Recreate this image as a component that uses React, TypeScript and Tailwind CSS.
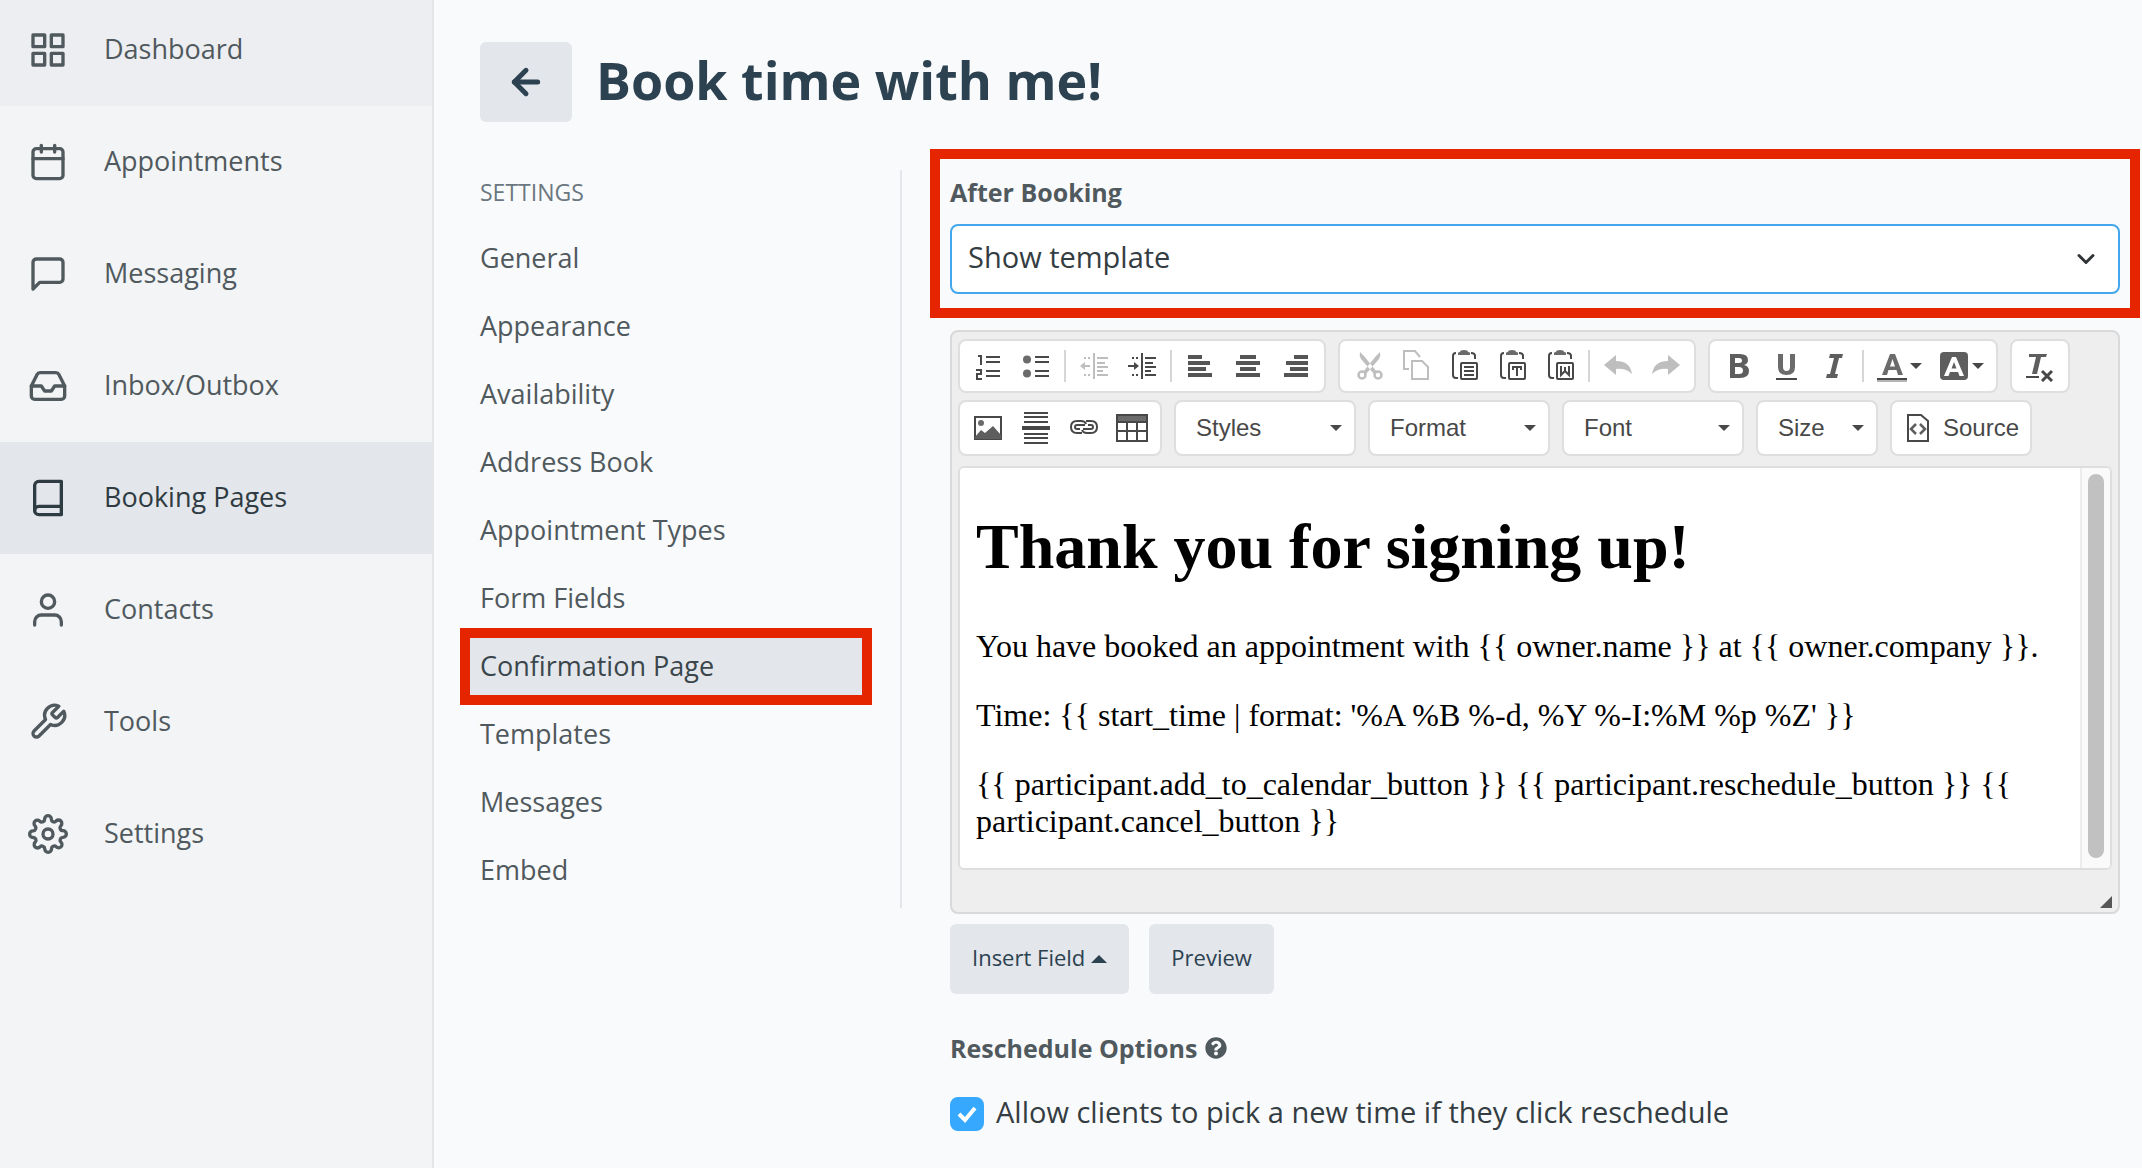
import type { ReactNode } from 'react';
import {
  FiArrowLeft,
  FiBook,
  FiCalendar,
  FiChevronDown,
  FiGrid,
  FiInbox,
  FiMessageSquare,
  FiSettings,
  FiTool,
  FiUser,
} from 'react-icons/fi';
import { FaQuestionCircle } from 'react-icons/fa';

const mainNav = [
  { label: 'Dashboard', icon: FiGrid, className: 'bg-[#eceef1] text-[#50595d]' },
  { label: 'Appointments', icon: FiCalendar, className: 'text-[#50595d]' },
  { label: 'Messaging', icon: FiMessageSquare, className: 'text-[#50595d]' },
  { label: 'Inbox/Outbox', icon: FiInbox, className: 'text-[#50595d]' },
  { label: 'Booking Pages', icon: FiBook, className: 'bg-[#e3e6ea] text-[#2f3b42]' },
  { label: 'Contacts', icon: FiUser, className: 'text-[#50595d]' },
  { label: 'Tools', icon: FiTool, className: 'text-[#50595d]' },
  { label: 'Settings', icon: FiSettings, className: 'text-[#50595d]' },
];

const settingsNav = [
  'General',
  'Appearance',
  'Availability',
  'Address Book',
  'Appointment Types',
  'Form Fields',
  'Confirmation Page',
  'Templates',
  'Messages',
  'Embed',
];

const Icon = ({ children }: { children: ReactNode }) => (
  <svg viewBox="0 0 32 32" className="h-8 w-8 shrink-0" fill="#484848">
    {children}
  </svg>
);

const PasteBoard = ({ children }: { children: ReactNode }) => (
  <Icon>
    <path d="M8 3Q5 3 5 6V25Q5 28 8 28H10M23 3Q27 3 27 6V9" fill="none" stroke="#484848" strokeWidth="2" />
    <path d="M10 5V3Q10 2 12 2Q12 0 16 0Q20 0 20 2Q22 2 22 3V5Z" fill="#6b6b6b" />
    <rect x="13" y="13" width="16" height="16" rx="1" fill="#fff" stroke="#484848" strokeWidth="2" />
    {children}
  </Icon>
);

const Group = ({ children }: { children: ReactNode }) => (
  <div className="flex h-[54px] items-center rounded-lg border-2 border-[#dedede] bg-white px-1">{children}</div>
);

const Tool = ({ label, disabled, children }: { label: string; disabled?: boolean; children: ReactNode }) => (
  <button
    type="button"
    aria-label={label}
    disabled={disabled}
    className="flex h-12 w-12 items-center justify-center disabled:opacity-35"
  >
    {children}
  </button>
);

const Separator = () => <span className="mx-1 h-8 w-0.5 bg-[#d6d6d6]" />;

const Caret = () => (
  <svg viewBox="0 0 12 6" className="h-1.5 w-3" fill="#484848">
    <path d="M0 0H12L6 6Z" />
  </svg>
);

const Combo = ({ label, small }: { label: string; small?: boolean }) => (
  <div className="relative">
    <select
      aria-label={label}
      className={`${small ? 'w-[122px]' : 'w-[182px]'} h-14 appearance-none rounded-lg border-2 border-[#dedede] bg-white pl-5 font-['Liberation_Sans',sans-serif] text-2xl text-[#484848]`}
    >
      <option>{label}</option>
    </select>
    <span className="pointer-events-none absolute inset-y-0 right-3.5 flex items-center">
      <Caret />
    </span>
  </div>
);

const Toolbar = () => (
  <div className="space-y-[7px]">
    <div className="flex gap-3">
      <Group>
        <Tool label="Numbered list">
          <Icon>
            <path d="M14 6H28V8H14ZM14 11H28V13H14ZM14 20H28V22H14ZM14 25H28V27H14Z" />
            <path d="M6 6H9V15M4 20H9V24H5V29H10" fill="none" stroke="#484848" strokeWidth="2" />
          </Icon>
        </Tool>
        <Tool label="Bulleted list">
          <Icon>
            <circle cx="7" cy="9.500" r="4" fill="#6b6b6b" />
            <circle cx="7" cy="23.500" r="4" fill="#6b6b6b" />
            <path d="M15 6H29V8H15ZM15 11H29V13H15ZM15 20H29V22H15ZM15 25H29V27H15Z" />
          </Icon>
        </Tool>
        <Separator />
        <Tool label="Decrease indent" disabled>
          <Icon>
            <path d="M15 3H17V29H15ZM19 7H30V9H19ZM19 12H27V14H19ZM19 16H30V18H19ZM19 20H25V22H19ZM19 24H30V26H19Z" />
            <path d="M6 7H8V9H6ZM10 7H12V9H10ZM6 24H8V26H6ZM10 24H12V26H10ZM2 16L7 12V15H12V17H7V20Z" />
          </Icon>
        </Tool>
        <Tool label="Increase indent">
          <Icon>
            <path d="M15 3H17V29H15ZM19 7H30V9H19ZM19 12H27V14H19ZM19 16H30V18H19ZM19 20H25V22H19ZM19 24H30V26H19Z" />
            <path d="M6 7H8V9H6ZM10 7H12V9H10ZM6 24H8V26H6ZM10 24H12V26H10ZM13 16L8 12V15H2V17H8V20Z" />
          </Icon>
        </Tool>
        <Separator />
        <Tool label="Align left">
          <Icon>
            <path d="M4 5H18V9H4ZM4 11H26V15H4ZM4 17H22V21H4ZM4 23H28V27H4Z" fill="#555" />
          </Icon>
        </Tool>
        <Tool label="Center">
          <Icon>
            <path d="M8 5H24V9H8ZM4 11H28V15H4ZM8 17H24V21H8ZM4 23H28V27H4Z" fill="#555" />
          </Icon>
        </Tool>
        <Tool label="Align right">
          <Icon>
            <path d="M14 5H28V9H14ZM6 11H28V15H6ZM10 17H28V21H10ZM4 23H28V27H4Z" fill="#555" />
          </Icon>
        </Tool>
      </Group>
      <Group>
        <Tool label="Cut" disabled>
          <Icon>
            <path d="M8 2Q7 6 9 9L22 24L25 22L12 6ZM28 2Q29 6 27 9L14 24L11 22L24 6Z" />
            <circle cx="10" cy="25" r="3.500" fill="none" stroke="#484848" strokeWidth="2.500" />
            <circle cx="26" cy="25" r="3.500" fill="none" stroke="#484848" strokeWidth="2.500" />
          </Icon>
        </Tool>
        <Tool label="Copy" disabled>
          <Icon>
            <path d="M9 19H4V1H15L20 7M12 11H22L28 17V29H12Z" fill="none" stroke="#484848" strokeWidth="2" />
          </Icon>
        </Tool>
        <Tool label="Paste">
          <PasteBoard>
            <path d="M16 16H26V18H16ZM16 20H26V22H16ZM16 24H26V26H16Z" />
          </PasteBoard>
        </Tool>
        <Tool label="Paste as plain text">
          <PasteBoard>
            <path d="M16 16H26V20H24V18H22V26H20V18H18V20H16Z" />
          </PasteBoard>
        </Tool>
        <Tool label="Paste from Word">
          <PasteBoard>
            <path d="M17 16V25L21 21L25 25V16M21 17V22" fill="none" stroke="#484848" strokeWidth="2" />
          </PasteBoard>
        </Tool>
        <Separator />
        <Tool label="Undo" disabled>
          <Icon>
            <path d="M2 15L14 5V11Q28 11 30 24Q24 18 14 19V25Z" />
          </Icon>
        </Tool>
        <Tool label="Redo" disabled>
          <Icon>
            <path d="M30 15L18 5V11Q4 11 2 24Q8 18 18 19V25Z" />
          </Icon>
        </Tool>
      </Group>
      <Group>
        <Tool label="Bold">
          <Icon>
            <path fillRule="evenodd" d="M8 4H18Q26 4 26 10Q26 14 22 15Q27 16 27 21Q27 28 18 28H8ZM13 8V13H17Q20 13 20 10.500Q20 8 17 8ZM13 17V24H17Q21 24 21 20.500Q21 17 17 17Z" fill="#5e5e5e" />
          </Icon>
        </Tool>
        <Tool label="Underline">
          <Icon>
            <path d="M8 4H13V17Q13 21 16.500 21Q20 21 20 17V4H25V17Q25 25 16.500 25Q8 25 8 17Z" fill="#6b6b6b" />
            <path d="M6 28H27V30H6Z" />
          </Icon>
        </Tool>
        <Tool label="Italic">
          <Icon>
            <path d="M12 4H25L24 8H21L17 24H20L19 28H8L9 24H12L16 8H11Z" fill="#5e5e5e" />
          </Icon>
        </Tool>
        <Separator />
        <button type="button" aria-label="Text color" className="flex h-12 w-[62px] items-center justify-center gap-0.5">
          <Icon>
            <path fillRule="evenodd" d="M14 4H19L27 25H22L20.500 20H12.500L11 25H6ZM16.500 9L14 16.500H19Z" fill="#6b6b6b" />
            <path d="M1 28H31V30H1Z" />
            <path d="M1 30H31V32H1Z" fill="#b5b5b5" />
          </Icon>
          <Caret />
        </button>
        <button type="button" aria-label="Background color" className="flex h-12 w-[62px] items-center justify-center gap-0.5">
          <Icon>
            <rect x="2" y="2" width="28" height="28" rx="4" fill="#5e5e5e" />
            <path fillRule="evenodd" d="M14 7H18L26 26H21.500L20 22H12L10.500 26H6ZM16 12L13.500 18.500H18.500Z" fill="#fff" />
          </Icon>
          <Caret />
        </button>
      </Group>
      <Group>
        <Tool label="Remove format">
          <Icon>
            <path d="M5 4H23L22 7H17L13 24H8L12 7H5Z" fill="#5e5e5e" />
            <path d="M2 26H15V28H2Z" />
            <path d="M18 21L28 31M28 21L18 31" stroke="#484848" strokeWidth="3" />
          </Icon>
        </Tool>
      </Group>
    </div>
    <div className="flex items-center gap-3">
      <div className="flex h-14 items-center rounded-lg border-2 border-[#dedede] bg-white px-1">
        <Tool label="Image">
          <Icon>
            <path d="M3 5H29V27H3Z" fill="none" stroke="#484848" strokeWidth="2" />
            <circle cx="9" cy="11" r="3" fill="#6b6b6b" />
            <path d="M3 27V25L9 18L13 21L21 14L29 23V27Z" fill="#5e5e5e" />
          </Icon>
        </Tool>
        <Tool label="Horizontal line">
          <Icon>
            <path d="M4 0H28V2H4ZM4 4H28V6H4ZM4 9H28V11H4ZM2 14H30V18H2ZM4 21H28V23H4ZM4 25H28V27H4ZM4 30H28V32H4Z" />
          </Icon>
        </Tool>
        <Tool label="Link">
          <Icon>
            <g fill="none" stroke="#484848" strokeWidth="2">
              <path d="M14 21H9Q3 21 3 15T9 9H13Q17 9 18 12M18 9H23Q29 9 29 15T23 21H19Q15 21 14 18" />
              <path d="M12 17H9Q7 17 7 15T9 13H17M20 13H23Q25 13 25 15T23 17H15" />
            </g>
          </Icon>
        </Tool>
        <Tool label="Table">
          <Icon>
            <path d="M0 2H32V10H0Z" fill="#6b6b6b" />
            <path d="M1 3H31V29H1ZM1 10H31M1 19H31M11 10V29M21 10V29" fill="none" stroke="#484848" strokeWidth="2" />
          </Icon>
        </Tool>
      </div>
      <Combo label="Styles" />
      <Combo label="Format" />
      <Combo label="Font" />
      <Combo label="Size" small />
      <button
        type="button"
        className="flex h-14 items-center gap-2 rounded-lg border-2 border-[#dedede] bg-white px-[11px] font-['Liberation_Sans',sans-serif] text-2xl text-[#484848]"
      >
        <Icon>
          <path d="M5 3H18L25 9V29H5Z" fill="none" stroke="#484848" strokeWidth="2" />
          <path d="M13 12L8 17L13 22M17 12L22 17L17 22" fill="none" stroke="#5e5e5e" strokeWidth="2.500" />
        </Icon>
        Source
      </button>
    </div>
  </div>
);

const Editor = () => (
  <div className="rounded-lg border-2 border-[#d9d9d9] bg-[#eee] px-1.5 pt-[7px]">
    <Toolbar />
    <div className="mt-2.5 flex h-[404px] overflow-hidden rounded-md border-2 border-[#dedede] bg-white">
      <div
        contentEditable
        suppressContentEditableWarning
        role="textbox"
        aria-label="Template"
        className="flex-1 space-y-8 px-4 pt-[42px] font-['Liberation_Serif',serif] text-[32px] leading-[37px] text-black outline-none"
      >
        <h1 className="mb-11 text-[64px] leading-[74px] font-bold">Thank you for signing up!</h1>
        <p>{'You have booked an appointment with {{ owner.name }} at {{ owner.company }}.'}</p>
        <p>{"Time: {{ start_time | format: '%A %B %-d, %Y %-I:%M %p %Z' }}"}</p>
        <p>{'{{ participant.add_to_calendar_button }} {{ participant.reschedule_button }} {{ participant.cancel_button }}'}</p>
      </div>
      <div className="w-[30px] border-l-2 border-[#ececec] bg-[#fafafa] px-1.5 pt-1.5 pb-2.5">
        <div className="h-full w-4 rounded-full bg-[#c1c1c1]" />
      </div>
    </div>
    <div className="flex h-[42px] items-end justify-end pb-1">
      <svg viewBox="0 0 12 12" className="h-3 w-3" fill="#555">
        <path d="M12 0V12H0Z" />
      </svg>
    </div>
  </div>
);

export default function App() {
  return (
    <div className="flex h-screen overflow-hidden bg-[#f9fafc] font-['Open_Sans',sans-serif] text-[27px] text-[#50595d]">
      <aside className="w-[434px] shrink-0 border-r-2 border-[#e3e5e8] bg-[#f2f4f6]">
        <nav className="-mt-1.5">
          {mainNav.map(({ label, icon: NavIcon, className }) => (
            <a key={label} href="#" className={`flex h-28 items-center gap-9 pl-7 ${className}`}>
              <NavIcon className="h-10 w-10" />
              <span className="pb-0.5">{label}</span>
            </a>
          ))}
        </nav>
      </aside>

      <main className="flex-1 pt-[42px] pr-0.5 pl-[26px]">
        <header className="flex items-center gap-6 pl-5">
          <button type="button" aria-label="Back" className="flex h-20 w-[92px] items-center justify-center rounded-md bg-[#e3e6ea] text-[#2c4251]">
            <FiArrowLeft className="h-10 w-10" strokeWidth={3} />
          </button>
          <h1 className="pb-1 text-[52px] leading-[76px] font-bold text-[#2c4251]">Book time with me!</h1>
        </header>

        <div className="mt-[27px] flex items-start gap-7">
          <nav className="mt-[21px] shrink-0 border-r-2 border-[#e3e6ea] pr-7 pb-1">
            <h2 className="mb-3.5 px-5 pt-1 text-[23px] leading-9 text-[#6b7780]">SETTINGS</h2>
            <ul className="w-[412px]">
              {settingsNav.map((item) => (
                <li key={item} className="relative h-[68px]">
                  {item === 'Confirmation Page' ? (
                    <a href="#" className="absolute inset-x-0 -top-1 -bottom-[5px] flex items-center border-[10px] border-[#e42500] bg-[#e3e6ea] px-2.5 text-[#3b464c]">
                      {item}
                    </a>
                  ) : (
                    <a href="#" className="flex h-full items-center px-5">
                      {item}
                    </a>
                  )}
                </li>
              ))}
            </ul>
          </nav>

          <section className="min-w-0 flex-1">
            <div className="border-[10px] border-[#e42500] px-2.5 pt-[15px] pb-3.5">
              <label htmlFor="after-booking" className="mb-3.5 block text-[25px] leading-9 font-bold">
                After Booking
              </label>
              <div className="relative">
                <select
                  id="after-booking"
                  className="block h-[70px] w-full appearance-none rounded-lg border-2 border-[#44a6ec] bg-white px-4 pb-1 text-[29px] text-[#343d42]"
                >
                  <option>Show template</option>
                </select>
                <span className="pointer-events-none absolute inset-y-0 right-5 flex items-center text-[#2f3336]">
                  <FiChevronDown className="h-7 w-7" strokeWidth={2.5} />
                </span>
              </div>
            </div>

            <div className="px-5 pt-3">
              <Editor />

              <div className="mt-2.5 flex gap-5 text-[22px] font-medium text-[#2c4251]">
                <button type="button" className="flex h-[70px] items-center gap-1.5 rounded-md bg-[#e3e6ea] px-[22px] pb-1">
                  Insert Field
                  <svg viewBox="0 0 16 8" className="mt-1 h-2 w-4" fill="currentColor">
                    <path d="M0 8L8 0L16 8Z" />
                  </svg>
                </button>
                <button type="button" className="h-[70px] rounded-md bg-[#e3e6ea] px-[22px] pb-1">
                  Preview
                </button>
              </div>

              <h2 className="mt-9 flex items-center gap-2 text-[25px] leading-9 font-bold">
                Reschedule Options
                <FaQuestionCircle className="h-[22px] w-[22px]" />
              </h2>

              <div className="mt-7 flex items-center gap-3">
                <div className="relative h-[34px] w-[34px]">
                  <input
                    id="allow-reschedule"
                    type="checkbox"
                    defaultChecked
                    className="peer block h-[34px] w-[34px] appearance-none rounded-lg border-2 border-[#c8ced3] checked:border-[#36a9fe] checked:bg-[#36a9fe]"
                  />
                  <svg viewBox="0 0 20 18" className="pointer-events-none absolute inset-0 m-auto hidden h-[18px] w-5 peer-checked:block" fill="none" stroke="#fff" strokeWidth="4">
                    <path d="M2 9L8 15L18 3" />
                  </svg>
                </div>
                <label htmlFor="allow-reschedule" className="pb-1 text-[29px] leading-9 text-[#343d42]">
                  Allow clients to pick a new time if they click reschedule
                </label>
              </div>
            </div>
          </section>
        </div>
      </main>
    </div>
  );
}
